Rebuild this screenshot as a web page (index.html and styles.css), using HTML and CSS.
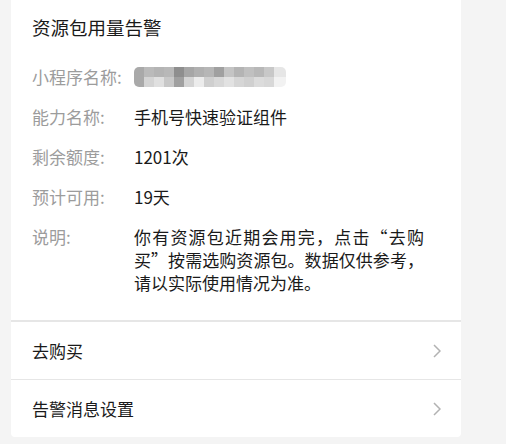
FILE: index.html
```html
<!DOCTYPE html>
<html lang="zh-CN">
  <head>
    <meta charset="UTF-8" />
    <meta content="width=device-width, initial-scale=1.0" name="viewport" />
    <link rel="stylesheet" href="styles.css">
  </head>
  <body>
    <div class="page">
      <div class="card">
        <div class="alert">
          <h1 class="alert-title">资源包用量告警</h1>
          <dl class="alert-info">
            <div class="info-row">
              <dt>小程序名称:</dt>
              <dd>
                <span class="mosaic">
                  <span class="mosaic-top"></span>
                  <span class="mosaic-bottom"></span>
                </span>
              </dd>
            </div>
            <div class="info-row">
              <dt>能力名称:</dt>
              <dd>手机号快速验证组件</dd>
            </div>
            <div class="info-row">
              <dt>剩余额度:</dt>
              <dd>1201次</dd>
            </div>
            <div class="info-row">
              <dt>预计可用:</dt>
              <dd>19天</dd>
            </div>
            <div class="info-row desc">
              <dt>说明:</dt>
              <dd>你有资源包近期会用完，点击“去购买”按需选购资源包。数据仅供参考，请以实际使用情况为准。</dd>
            </div>
          </dl>
        </div>

        <a href="#" class="menu-item">
          <span>去购买</span>
          <svg class="arrow" width="8" height="14" viewBox="0 0 8 14">
            <path d="M1 1 L7 7 L1 13" />
          </svg>
        </a>
        <a href="#" class="menu-item">
          <span>告警消息设置</span>
          <svg class="arrow" width="8" height="14" viewBox="0 0 8 14">
            <path d="M1 1 L7 7 L1 13" />
          </svg>
        </a>
      </div>
    </div>
  </body>
</html>
```

FILE: styles.css
```css
body {
  margin: 0;
  background: #f4f4f4;
  font-family: "Noto Sans CJK SC", "Noto Sans", sans-serif;
}
.page {
  padding: 0 0 7px 11px;
}
.card {
  width: 450px;
  background: #ffffff;
  border-radius: 0 0 4px 4px;
}
.alert {
  padding: 14px 21px 26px;
  border-bottom: 2px solid #e6e6e6;
}
.alert-title {
  margin: 0;
  font-size: 18.5px;
  line-height: 26px;
  font-weight: normal;
  color: #1a1a1a;
}
.alert-info {
  margin: 25px 0 0;
  display: flex;
  flex-direction: column;
  gap: 16px;
}
.info-row {
  display: flex;
  font-size: 17px;
  line-height: 24px;
}
.info-row dt {
  width: 102px;
  flex-shrink: 0;
  color: #9c9c9c;
}
.info-row dd {
  margin: 0;
  display: flex;
  align-items: center;
  color: #1a1a1a;
}
.info-row.desc {
  line-height: 23px;
}
.info-row.desc dd {
  display: block;
  width: 290px;
  text-align: justify;
}

/* 打码的小程序名称 */
.mosaic {
  display: flex;
  flex-direction: column;
  width: 152px;
  height: 20px;
  border-radius: 5px;
  overflow: hidden;
  filter: blur(0.4px);
}
.mosaic-top,
.mosaic-bottom {
  flex: 1;
}
.mosaic-top {
  background: linear-gradient(90deg, #a9a9a9 0 10px, #bababa 10px 20px, #b4b4b4 20px 30px, #b8b8b8 30px 40px, #8e8e8e 40px 50px, #a6a6a6 50px 60px, #b0b0b0 60px 70px, #b6b6b6 70px 80px, #a0a0a0 80px 90px, #c4c4c4 90px 100px, #b4b4b4 100px 110px, #c0c0c0 110px 120px, #b8b8b8 120px 130px, #c8c8c8 130px 140px, #e6e6e6 140px);
}
.mosaic-bottom {
  background: linear-gradient(90deg, #a9a9a9 0 10px, #d4d4d4 10px 20px, #e0e0e0 20px 30px, #c8c8c8 30px 40px, #a0a0a0 40px 50px, #d4d4d4 50px 60px, #ececec 60px 70px, #cfcfcf 70px 80px, #d8d8d8 80px 90px, #e2e2e2 90px 100px, #d6d6d6 100px 110px, #d0d0d0 110px 120px, #dcdcdc 120px 130px, #d8d8d8 130px 140px, #f2f2f2 140px);
}

.menu-item {
  display: flex;
  justify-content: space-between;
  align-items: center;
  height: 57px;
  padding: 0 20px 0 21px;
  font-size: 17px;
  color: #1a1a1a;
  text-decoration: none;
}
.menu-item + .menu-item {
  border-top: 1px solid #e6e6e6;
}
.arrow path {
  fill: none;
  stroke: #b2b2b2;
  stroke-width: 1.5;
}
```
